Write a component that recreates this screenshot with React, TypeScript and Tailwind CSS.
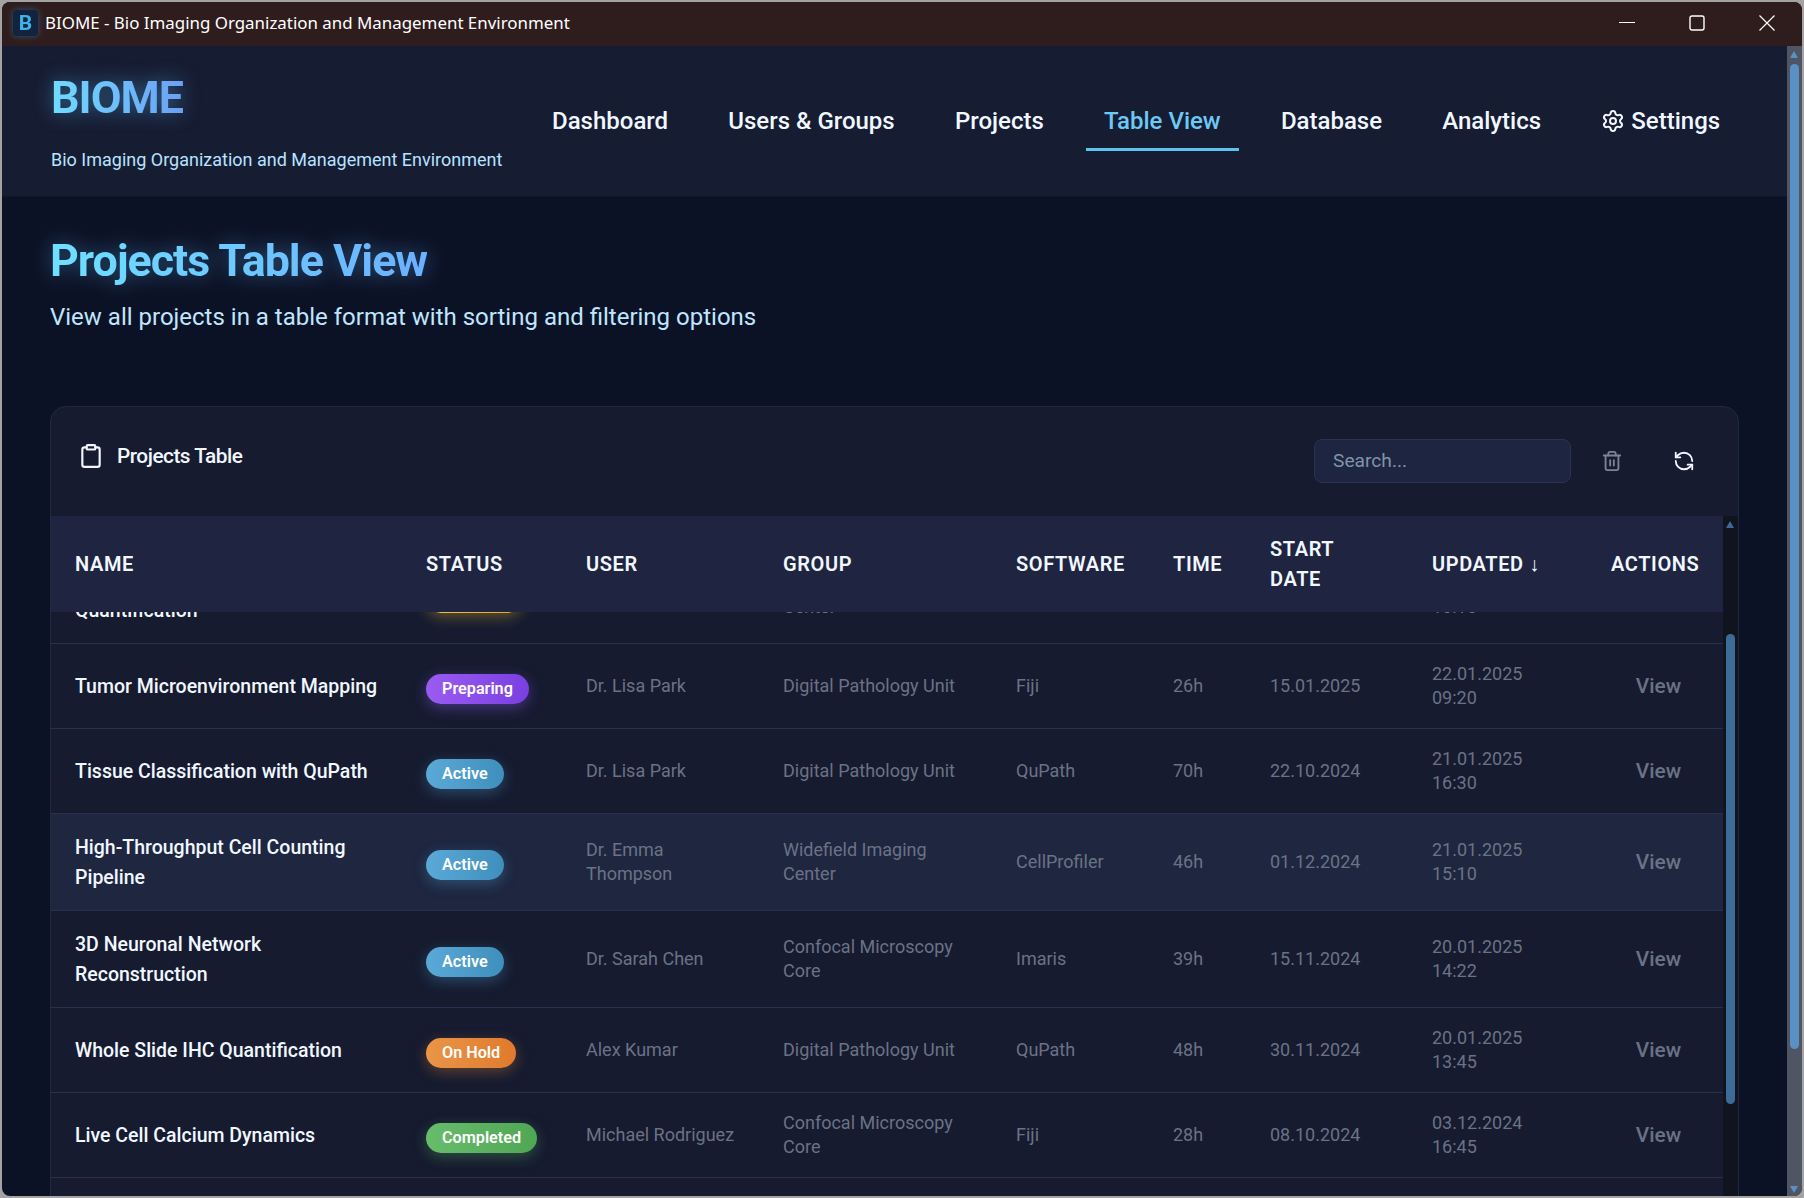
import React from 'react';
import { Clipboard, Trash2, RefreshCcw, Settings } from 'lucide-react';

const gridCols = 'grid grid-cols-[350px_160px_198px_233px_157px_97px_162px_178px_137px]';

type Row = {
    name: string[];
    status: string;
    user: string[];
    group: string[];
    software: string;
    time: string;
    start: string;
    updated: string[];
    hover?: boolean;
    clipped?: boolean;
};

const badgeStyles: Record<string, string> = {
    Planning: 'bg-gradient-to-r from-[#f5c542] to-[#e0a81e] shadow-[0_4px_14px_rgba(240,190,40,0.35)]',
    Preparing: 'bg-gradient-to-r from-[#9b5bf2] to-[#7a3fe0] shadow-[0_4px_14px_rgba(139,92,246,0.4)]',
    Active: 'bg-gradient-to-r from-[#5aa9d6] to-[#3f8fbd] shadow-[0_4px_14px_rgba(80,160,210,0.35)]',
    'On Hold': 'bg-gradient-to-r from-[#ea9547] to-[#e07a2c] shadow-[0_4px_14px_rgba(230,130,50,0.35)]',
    Completed: 'bg-gradient-to-r from-[#68bd6c] to-[#4fa653] shadow-[0_4px_14px_rgba(90,180,95,0.35)]',
};

const rows: Row[] = [
    { name: ['Spatial Transcriptomics', 'Quantification'], status: 'Planning', user: ['Dr. Sarah Chen'], group: ['Confocal Microscopy', 'Center'], software: 'QuPath', time: '32h', start: '10.01.2025', updated: ['22.01.2025', '10:15'], clipped: true },
    { name: ['Tumor Microenvironment Mapping'], status: 'Preparing', user: ['Dr. Lisa Park'], group: ['Digital Pathology Unit'], software: 'Fiji', time: '26h', start: '15.01.2025', updated: ['22.01.2025', '09:20'] },
    { name: ['Tissue Classification with QuPath'], status: 'Active', user: ['Dr. Lisa Park'], group: ['Digital Pathology Unit'], software: 'QuPath', time: '70h', start: '22.10.2024', updated: ['21.01.2025', '16:30'] },
    { name: ['High-Throughput Cell Counting', 'Pipeline'], status: 'Active', user: ['Dr. Emma', 'Thompson'], group: ['Widefield Imaging', 'Center'], software: 'CellProfiler', time: '46h', start: '01.12.2024', updated: ['21.01.2025', '15:10'], hover: true },
    { name: ['3D Neuronal Network', 'Reconstruction'], status: 'Active', user: ['Dr. Sarah Chen'], group: ['Confocal Microscopy', 'Core'], software: 'Imaris', time: '39h', start: '15.11.2024', updated: ['20.01.2025', '14:22'] },
    { name: ['Whole Slide IHC Quantification'], status: 'On Hold', user: ['Alex Kumar'], group: ['Digital Pathology Unit'], software: 'QuPath', time: '48h', start: '30.11.2024', updated: ['20.01.2025', '13:45'] },
    { name: ['Live Cell Calcium Dynamics'], status: 'Completed', user: ['Michael Rodriguez'], group: ['Confocal Microscopy', 'Core'], software: 'Fiji', time: '28h', start: '08.10.2024', updated: ['03.12.2024', '16:45'] },
];

const navItems = ['Dashboard', 'Users & Groups', 'Projects', 'Table View', 'Database', 'Analytics'];

const headers = [
    { label: ['NAME'], pad: 'pl-[24px]' },
    { label: ['STATUS'], pad: 'pl-[25px]' },
    { label: ['USER'], pad: 'pl-[25px]' },
    { label: ['GROUP'], pad: 'pl-[24px]' },
    { label: ['SOFTWARE'], pad: 'pl-[24px]' },
    { label: ['TIME'], pad: 'pl-[24px]' },
    { label: ['START', 'DATE'], pad: 'pl-[24px]' },
    { label: ['UPDATED ↓'], pad: 'pl-[24px]' },
    { label: ['ACTIONS'], pad: 'pl-[25px]' },
];

const Lines: React.FC<{ items: string[] }> = ({ items }) => (
    <>
        {items.map((line) => (
            <div key={line}>{line}</div>
        ))}
    </>
);

const Cell: React.FC<{ children: React.ReactNode; pad?: string }> = ({ children, pad = 'pl-[24px]' }) => (
    <div className={`${pad} text-[18px] leading-[24px] text-[#6b7285]`}>{children}</div>
);

const TableRow: React.FC<{ row: Row }> = ({ row }) => (
    <div className={`${gridCols} items-center border-b border-[#2a2f50] py-[18px] ${row.hover ? 'bg-[#1e2640]' : ''} ${row.clipped ? 'mt-[-65px]' : ''}`}>
        <div className="translate-y-px pl-[24px] text-[19.5px] font-medium leading-[30px] text-[#f1f7ff]">
            <Lines items={row.name} />
        </div>
        <div className="pl-[25px] pt-[5px]">
            <span className={`inline-block rounded-[15px] px-4 text-[16.2px] font-semibold leading-[30px] text-white ${badgeStyles[row.status]}`}>
                {row.status}
            </span>
        </div>
        <Cell pad="pl-[25px]"><Lines items={row.user} /></Cell>
        <Cell><Lines items={row.group} /></Cell>
        <Cell>{row.software}</Cell>
        <Cell>{row.time}</Cell>
        <Cell>{row.start}</Cell>
        <Cell><Lines items={row.updated} /></Cell>
        <div className="pl-[8px] text-center text-[20.8px] font-medium leading-[24px] text-[#6b7285]">View</div>
    </div>
);

export default function App() {
    return (
        <div className="h-[1198px] w-full overflow-hidden bg-[#a3a3a3] p-[2px] font-['Roboto',sans-serif]">
            <div className="flex h-full flex-col overflow-hidden rounded-[8px] bg-[#0c1226]">
                {/* title bar */}
                <div className="flex h-[44px] shrink-0 items-center bg-[#2f1d1e] pb-[2px] text-white">
                    <div className="ml-[11px] flex h-[26px] w-[25px] items-center justify-center rounded-[4px] bg-[#12233f] text-[21px] font-bold leading-none text-[#3fb2e8] drop-shadow-[0_0_3px_rgba(60,170,230,0.4)]">B</div>
                    <div className="ml-[7px] font-['Noto_Sans',sans-serif] text-[16.9px]">BIOME - Bio Imaging Organization and Management Environment</div>
                    <div className="ml-auto flex items-center">
                        <div className="flex w-[70px] justify-center">
                            <svg width="16" height="16" viewBox="0 0 16 16" fill="none" stroke="currentColor"><path d="M0 7.5h16" /></svg>
                        </div>
                        <div className="flex w-[70px] justify-center">
                            <svg width="16" height="16" viewBox="0 0 16 16" fill="none" stroke="currentColor" strokeWidth="1.4"><rect x="1" y="1" width="14" height="14" rx="2" /></svg>
                        </div>
                        <div className="flex w-[70px] justify-center">
                            <svg width="16" height="16" viewBox="0 0 16 16" fill="none" stroke="currentColor" strokeWidth="1.2"><path d="M0.5 0.5l15 15M15.5 0.5l-15 15" /></svg>
                        </div>
                    </div>
                </div>

                <div className="flex min-h-0 flex-1">
                    <div className="min-w-0 flex-1">
                        {/* header */}
                        <div className="flex h-[151px] items-start border-b border-[#10162b] bg-[#161c32] pl-[49px]">
                            <div className="w-[483px] shrink-0 pt-[22px]">
                                <div className="w-fit bg-gradient-to-r from-[#6fdcff] to-[#6c9ff5] bg-clip-text text-[44.8px] font-bold leading-[60px] tracking-[-1px] text-transparent drop-shadow-[0_0_10px_rgba(90,190,255,0.45)]">BIOME</div>
                                <div className="mt-[20px] text-[18px] leading-[24px] text-[#b8e3ff]">Bio Imaging Organization and Management Environment</div>
                            </div>
                            <nav className="flex gap-[24.2px] pt-[56px]">
                                {navItems.map((item) => (
                                    <div key={item} className={`border-b-[3px] px-[18px] pb-[8px] text-[24px] font-medium leading-[38px] ${item === 'Table View' ? 'border-[#5cc2ee] text-[#6cc9f5]' : 'border-transparent text-[#f1f7ff]'}`}>
                                        {item}
                                    </div>
                                ))}
                                <div className="flex items-start gap-[6px] px-[18px] text-[24px] font-medium leading-[38px] text-[#f1f7ff]">
                                    <Settings size={24} strokeWidth={2} className="mt-[7px]" />
                                    Settings
                                </div>
                            </nav>
                        </div>

                        {/* page */}
                        <div className="pl-[48px] pr-[48px] pt-[37px]">
                            <h1 className="w-fit bg-gradient-to-r from-[#6fe0ff] to-[#6cb0ff] bg-clip-text text-[44.8px] font-bold leading-[54px] tracking-[-1px] text-transparent drop-shadow-[0_0_10px_rgba(90,190,255,0.4)]">Projects Table View</h1>
                            <p className="mt-[15px] text-[24px] leading-[29px] text-[#bfe6ff]">View all projects in a table format with sorting and filtering options</p>

                            <div className="mt-[74px] h-[900px] overflow-hidden rounded-t-[16px] border border-[#1f2a3f] bg-[#161b30]">
                                <div className="flex h-[109px] items-start pl-[27px]">
                                    <Clipboard size={26} strokeWidth={2} className="mt-[36px] text-[#f1f7ff]" />
                                    <div className="ml-[13px] mt-[36px] text-[20.8px] font-medium leading-[26px] tracking-[-0.5px] text-[#f1f7ff]">Projects Table</div>
                                    <div className="ml-auto mt-[32px] flex h-[44px] w-[257px] items-center rounded-[8px] border border-[#2b3350] bg-[#1e2540] pl-[18px] text-[19.2px] text-[#7f93ab]">Search...</div>
                                    <Trash2 size={22} strokeWidth={2} className="ml-[30px] mt-[43px] text-[#7d8494]" />
                                    <RefreshCcw size={22} strokeWidth={2} className="ml-[50px] mr-[43px] mt-[43px] text-[#f1f7ff]" />
                                </div>

                                <div className="flex h-[800px]">
                                    <div className="relative w-[1672px] overflow-hidden">
                                        <div className={`${gridCols} relative z-10 items-center bg-[#1f2540] py-[18px] text-[20px] font-semibold leading-[30px] tracking-[0.6px] text-[#f1f7ff]`}>
                                            {headers.map((h) => (
                                                <div key={h.label.join(' ')} className={h.pad}><Lines items={h.label} /></div>
                                            ))}
                                        </div>
                                        {rows.map((row) => (
                                            <TableRow key={row.name.join(' ')} row={row} />
                                        ))}
                                    </div>
                                    {/* table scrollbar */}
                                    <div className="relative w-[15px] bg-[#10141f]">
                                        <div className="absolute left-[3px] top-[5px] h-0 w-0 border-x-[4.5px] border-b-[7px] border-x-transparent border-b-[#3d6a96]" />
                                        <div className="absolute left-[3px] top-[118px] h-[470px] w-[9px] rounded-[4.5px] bg-[#3d6a96]" />
                                    </div>
                                </div>
                            </div>
                        </div>
                    </div>

                    {/* window scrollbar */}
                    <div className="relative w-[15px] shrink-0 bg-[#4f5563]">
                        <div className="absolute left-[3px] top-[5px] h-0 w-0 border-x-[4.5px] border-b-[7px] border-x-transparent border-b-[#5b90c4]" />
                        <div className="absolute left-[3px] top-[18px] h-[985px] w-[9px] rounded-[4.5px] bg-[#5b90c4]" />
                        <div className="absolute bottom-[3px] left-[3px] h-0 w-0 border-x-[4.5px] border-t-[7px] border-x-transparent border-t-[#5b90c4]" />
                    </div>
                </div>
            </div>
        </div>
    );
}
